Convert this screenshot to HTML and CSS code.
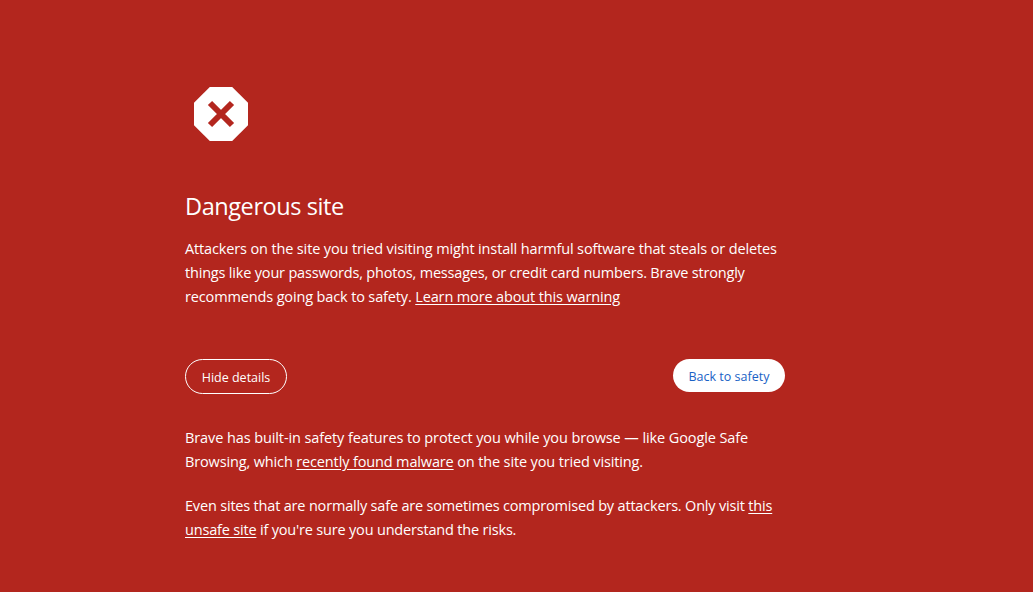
FILE: index.html
```html
<!DOCTYPE html>
<html lang="en">
<head>
<meta charset="UTF-8">
<meta name="viewport" content="width=device-width, initial-scale=1.0">
<title>Security error</title>
<link rel="stylesheet" href="styles.css">
</head>
<body>
<div class="interstitial">
    <svg class="icon" viewBox="0 0 54 54" width="54" height="54">
        <path fill="#fff" d="M15.8 0h22.4L54 15.8v22.4L38.2 54H15.8L0 38.2V15.8z"/>
        <path fill="none" stroke="#b3261e" stroke-width="6" d="M16 16l22 22M38 16L16 38"/>
    </svg>
    <h1>Dangerous site</h1>
    <p>
        <span class="line">Attackers on the site you tried visiting might install harmful software that steals or deletes</span>
        <span class="line tight">things like your passwords, photos, messages, or credit card numbers. Brave strongly</span>
        <span class="line">recommends going back to safety. <a href="#">Learn more about this warning</a></span>
    </p>
    <div class="nav-wrapper">
        <button class="details-button">Hide details</button>
        <button class="primary-button">Back to safety</button>
    </div>
    <div class="details">
        <p>
            <span class="line loose">Brave has built-in safety features to protect you while you browse — like Google Safe</span>
            <span class="line">Browsing, which <a href="#">recently found malware</a> on the site you tried visiting.</span>
        </p>
        <p>
            <span class="line tight">Even sites that are normally safe are sometimes compromised by attackers. Only visit <a href="#">this</a></span>
            <span class="line tight"><a href="#">unsafe site</a> if you're sure you understand the risks.</span>
        </p>
    </div>
</div>
</body>
</html>
```
FILE: styles.css
```css
body {
    margin: 0;
    background-color: #b3261e;
    color: #fff;
    font-family: "Open Sans", "Noto Sans", sans-serif;
    font-size: 14.5px;
    line-height: 24px;
}
.interstitial {
    width: 600px;
    margin-left: 185px;
    padding-top: 87px;
}
.icon {
    display: block;
    margin-left: 9px;
}
h1 {
    margin: 49px 0 15px;
    font-size: 23.5px;
    font-weight: 400;
    line-height: 32px;
    letter-spacing: -0.42px;
}
p {
    margin: 0;
}
a {
    color: inherit;
    text-underline-offset: 2px;
}
.line {
    display: block;
    white-space: nowrap;
    letter-spacing: -0.14px;
}
.tight {
    letter-spacing: -0.185px;
}
.loose {
    letter-spacing: -0.1px;
}
.nav-wrapper {
    display: flex;
    justify-content: space-between;
    align-items: flex-start;
    margin-top: 50px;
}
button {
    box-sizing: border-box;
    border-radius: 20px;
    padding: 2px 0 0;
    font-family: inherit;
    font-size: 12.5px;
    white-space: nowrap;
}
.details-button {
    width: 102px;
    height: 35px;
    border: 1px solid #fff;
    background: none;
    color: #fff;
}
.primary-button {
    width: 112px;
    height: 33px;
    border: none;
    background: #fff;
    color: #1a62c6;
}
.details {
    margin-top: 32px;
}
.details p + p {
    margin-top: 20px;
}
```
